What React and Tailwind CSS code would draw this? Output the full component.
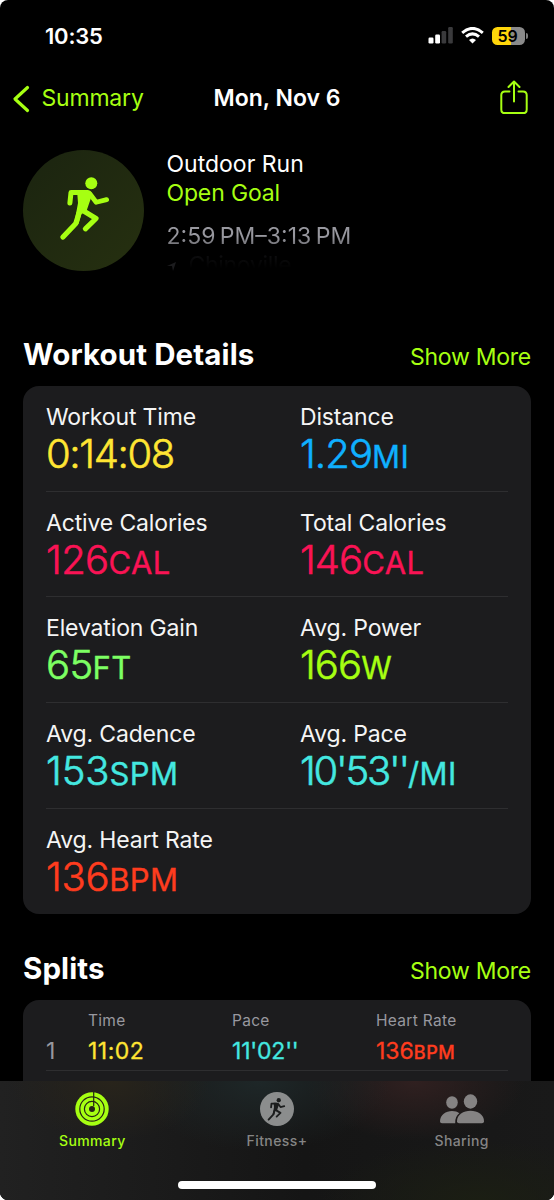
import React from "react";

const METRICS = [
  [
    { label: "Workout Time", value: "0:14:08", unit: "", color: "text-[#ffe533]", tracking: "tracking-[-1.35px]" },
    { label: "Distance", value: "1.29", unit: "MI", color: "text-[#0fb0ff]", tracking: "tracking-[-0.9px]" },
  ],
  [
    { label: "Active Calories", value: "126", unit: "CAL", color: "text-[#fa1355]", tracking: "tracking-[-0.6px]" },
    { label: "Total Calories", value: "146", unit: "CAL", color: "text-[#fa1355]", tracking: "tracking-[-0.9px]" },
  ],
  [
    { label: "Elevation Gain", value: "65", unit: "FT", color: "text-[#7dff63]", tracking: "tracking-[-0.6px]" },
    { label: "Avg. Power", value: "166", unit: "W", color: "text-[#a6ff12]", tracking: "tracking-[-0.9px]" },
  ],
  [
    { label: "Avg. Cadence", value: "153", unit: "SPM", color: "text-[#44e8e0]", tracking: "tracking-[-0.1px]" },
    { label: "Avg. Pace", value: "10'53''", unit: "/MI", color: "text-[#44e8e0]", tracking: "tracking-[-2.2px]" },
  ],
  [{ label: "Avg. Heart Rate", value: "136", unit: "BPM", color: "text-[#ff3c1e]", tracking: "tracking-[-0.3px]" }],
];

function Runner({ className }) {
  return (
    <svg viewBox="0 0 50 64" className={className} fill="none" stroke="currentColor" strokeLinecap="round" strokeLinejoin="round">
      <circle cx="31.3" cy="6.3" r="6" fill="currentColor" stroke="none" />
      <path d="M24 15.6H11L9.9 26" strokeWidth="5" />
      <path d="M30 17L36.2 25.3L46.6 22.6" strokeWidth="4.8" />
      <path d="M17 13.1H28Q33 14 31.5 19.5L26.5 34L21.5 37L18.5 47L14.5 45L18 26Z" fill="currentColor" stroke="none" />
      <path d="M22 33L36 41.5L25.4 51.8" strokeWidth="5.2" />
      <path d="M19 36L15.8 46.5L3 60" strokeWidth="5.2" />
    </svg>
  );
}

function StatusBar() {
  return (
    <div className="flex h-[71px] items-center justify-between pl-[45px] pr-[26px]">
      <span className="text-[22px] font-semibold leading-none tracking-[-0.2px]">10:35</span>
      <div className="flex items-center">
        <svg width="25" height="17" viewBox="0 0 25 17" className="mr-[8px]">
          <rect x="0.5" y="10.5" width="5" height="6" rx="1.2" fill="#fff" />
          <rect x="7.2" y="7.5" width="4.8" height="9" rx="1.2" fill="#fff" />
          <rect x="13.6" y="4" width="4.6" height="12.5" rx="1.2" fill="#3a3a3c" />
          <rect x="20.2" y="0" width="4.6" height="16.5" rx="1.2" fill="#3a3a3c" />
        </svg>
        <svg width="23" height="17" viewBox="0 0 23 17" className="mr-[8px]" fill="none" stroke="#fff">
          <path d="M1.2 5.8Q11.5 -3 21.8 5.8" strokeWidth="3" />
          <path d="M5 9.7Q11.5 4 18 9.7" strokeWidth="3" />
          <path d="M8 13Q11.5 10 15 13L11.5 16.5Z" fill="#fff" stroke="none" />
        </svg>
        <div className="flex h-[18px] w-[33px] items-center justify-center rounded-[5.5px] bg-[linear-gradient(to_right,#ffd60a_0_59%,#8a8a8a_59%)] pr-[2px]">
          <span className="text-[16px] font-semibold leading-none tracking-[-0.2px] text-black">59</span>
        </div>
        <div className="ml-[1px] h-[6px] w-[2px] rounded-r-full bg-[#7c7c7c]" />
      </div>
    </div>
  );
}

function NavBar() {
  return (
    <div className="grid h-[55px] grid-cols-[1fr_auto_1fr] items-center px-[12px] text-[23px] leading-none">
      <div className="flex items-center text-[#a6ff12]">
        <svg width="18" height="28" viewBox="0 0 18 28" className="mr-[11.5px]" fill="none" stroke="currentColor" strokeWidth="3.2" strokeLinecap="round" strokeLinejoin="round">
          <path d="M15.5 2.5L3 14L15.5 25.5" />
        </svg>
        <span className="tracking-[-0.2px]">Summary</span>
      </div>
      <span className="font-semibold">Mon, Nov 6</span>
      <svg width="28" height="35" viewBox="0 0 28 35" className="-mt-[3px] mr-[14px] justify-self-end text-[#a6ff12]" fill="none" stroke="currentColor" strokeWidth="2" strokeLinecap="round" strokeLinejoin="round">
        <path d="M9.5 11.4H5Q1.3 11.4 1.3 15.1V29.4Q1.3 33.1 5 33.1H23Q26.7 33.1 26.7 29.4V15.1Q26.7 11.4 23 11.4H18.5" />
        <path d="M14 21.5V2M8.5 7L14 1.5L19.5 7" />
      </svg>
    </div>
  );
}

function SectionHeader({ title }) {
  return (
    <div className="flex items-baseline justify-between px-[23px]">
      <h2 className="text-[29.5px] font-bold leading-[36px] tracking-[0.1px]">{title}</h2>
      <span className="text-[23px] leading-[36px] tracking-[-0.25px] text-[#a6ff12]">Show More</span>
    </div>
  );
}

function Metric({ label, value, unit, color, tracking }) {
  return (
    <div className="pt-[17px]">
      <div className="text-[23px] leading-[28px] tracking-[-0.15px] text-[#f5f5f5]">{label}</div>
      <div className={"whitespace-nowrap text-[40px] font-light leading-[46px] [-webkit-text-stroke:0.6px_currentColor] " + color}>
        <span className={tracking}>{value}</span>
        <span className="text-[31px] font-normal tracking-[0.4px] [-webkit-text-stroke:0.35px_currentColor]">{unit}</span>
      </div>
    </div>
  );
}

function SplitCell({ label, width, children }) {
  return (
    <div className={width}>
      <div className="text-[15.5px] leading-[20px] tracking-[0.3px] text-[#98989f]">{label}</div>
      <div className="mt-[6px] text-[23px] leading-[28px] [-webkit-text-stroke:0.3px_currentColor]">{children}</div>
    </div>
  );
}

function TabBar() {
  return (
    <div className="absolute inset-x-0 bottom-0 flex h-[119px] flex-col overflow-hidden bg-[#181818] bg-[radial-gradient(ellipse_100px_60px_at_110px_0,#28241b,transparent),radial-gradient(ellipse_130px_70px_at_260px_0,#1e2728,transparent),radial-gradient(ellipse_110px_60px_at_415px_0,#302020,transparent),radial-gradient(ellipse_160px_60px_at_480px_119px,#1b1e13,transparent),linear-gradient(to_right,#212121,#151515_55%,#191919)]">
      <div className="grid grid-cols-3 pt-[11px] text-center text-[14px] font-medium leading-[18px] tracking-[0.4px] text-[#858585]">
        <div className="flex flex-col items-center text-[#a6ff12]">
          <svg width="34" height="34" viewBox="0 0 34 34">
            <circle cx="17" cy="17" r="16.7" fill="currentColor" />
            <g fill="none" stroke="#252416" strokeWidth="1.2">
              <circle cx="17" cy="17" r="12.2" />
              <circle cx="17" cy="17" r="7.6" />
              <path d="M18.7 0V14" />
            </g>
            <circle cx="17" cy="17" r="3" fill="#252416" />
          </svg>
          <span className="mt-[6px]">Summary</span>
        </div>
        <div className="flex flex-col items-center">
          <div className="flex size-[34px] items-center justify-center rounded-full bg-[#8b8d8d] text-[#1b1d1d]">
            <Runner className="h-[23px] w-[19px]" />
          </div>
          <span className="mt-[6px]">Fitness+</span>
        </div>
        <div className="flex flex-col items-center">
          <svg width="46" height="34" viewBox="0 0 46 34" fill="#858383">
            <ellipse cx="13" cy="10.5" rx="5.8" ry="6.2" />
            <ellipse cx="31.5" cy="9.5" rx="6.7" ry="7.2" />
            <path d="M1 29.5C1 23 7 19 13 19C16 19 18.5 19.8 20.3 21.2C17.6 23.5 16 26.5 16.2 31.2H3Q1 31.2 1 29.5Z" />
            <path d="M18 29.3C18 22.5 24.5 18.8 31.5 18.8S45 22.5 45 29.3Q45 31.2 43 31.2H20Q18 31.2 18 29.3Z" />
          </svg>
          <span className="mt-[6px]">Sharing</span>
        </div>
      </div>
      <div className="mx-auto mb-[11px] mt-auto h-[8px] w-[198px] rounded-full bg-white" />
    </div>
  );
}

export default function App() {
  return (
    <div className="h-[1200px] w-[554px] bg-white">
      <div className="relative h-[1200px] overflow-hidden rounded-[8px] bg-black font-['Inter',sans-serif] text-white">
        <StatusBar />
        <NavBar />
        <div className="flex h-[210px] pl-[23px] pt-[23.5px]">
          <div className="flex size-[121px] shrink-0 items-center justify-center rounded-full bg-[linear-gradient(135deg,#1b2410,#263010)] text-[#a6ff12]">
            <Runner className="-mt-[3px] ml-[3px] h-[64px] w-[50px]" />
          </div>
          <div className="ml-[22.5px] pt-[0.5px] text-[23px] leading-[29px]">
            <div className="tracking-[0px]">Outdoor Run</div>
            <div className="tracking-[-0.15px] text-[#a6ff12]">Open Goal</div>
            <div className="mt-[14px] bg-[linear-gradient(#98989f_14px,#5a5a5e)] bg-clip-text tracking-[0px] text-transparent [word-spacing:-2px]">2:59 PM–3:13 PM</div>
            <div className="flex items-center bg-[linear-gradient(#121214,#000_60%)] bg-clip-text tracking-[-0.3px] text-transparent">
              <svg width="10" height="10" viewBox="0 0 10 10" className="mr-[12px]" fill="#1c1c1e"><path d="M0 5L9 1L6 10L5 5Z" /></svg>
              Chinoville
            </div>
          </div>
        </div>
        <SectionHeader title="Workout Details" />
        <div className="mx-[23px] mt-[11px] h-[528px] rounded-[16px] bg-[#1c1c1e] px-[23px]">
          {METRICS.map((row, i) => (
            <div key={row[0].label} className={"grid h-[105.7px] grid-cols-[254px_1fr] " + (i < METRICS.length - 1 ? "border-b border-[#2e2e30]" : "")}>
              {row.map((m) => (
                <Metric key={m.label} {...m} />
              ))}
            </div>
          ))}
        </div>
        <div className="mt-[36px]">
          <SectionHeader title="Splits" />
        </div>
        <div className="mx-[23px] mt-[11px] h-[120px] rounded-[16px] bg-[#1c1c1e] px-[23px]">
          <div className="flex h-[71px] border-b border-[#2e2e30] pt-[11px]">
            <div className="w-[42px] pt-[26px] text-[23px] leading-[28px] text-[#98989f]">1</div>
            <SplitCell label="Time" width="w-[144px]"><span className="tracking-[0.5px] text-[#ffe533]">11:02</span></SplitCell>
            <SplitCell label="Pace" width="w-[144px]"><span className="tracking-[-0.2px] text-[#44e8e0]">11'02''</span></SplitCell>
            <SplitCell label="Heart Rate" width="w-[130px]">
              <span className="text-[#ff3c1e]">136<span className="text-[18px] font-medium tracking-[0.5px]">BPM</span></span>
            </SplitCell>
          </div>
        </div>
        <TabBar />
      </div>
    </div>
  );
}
